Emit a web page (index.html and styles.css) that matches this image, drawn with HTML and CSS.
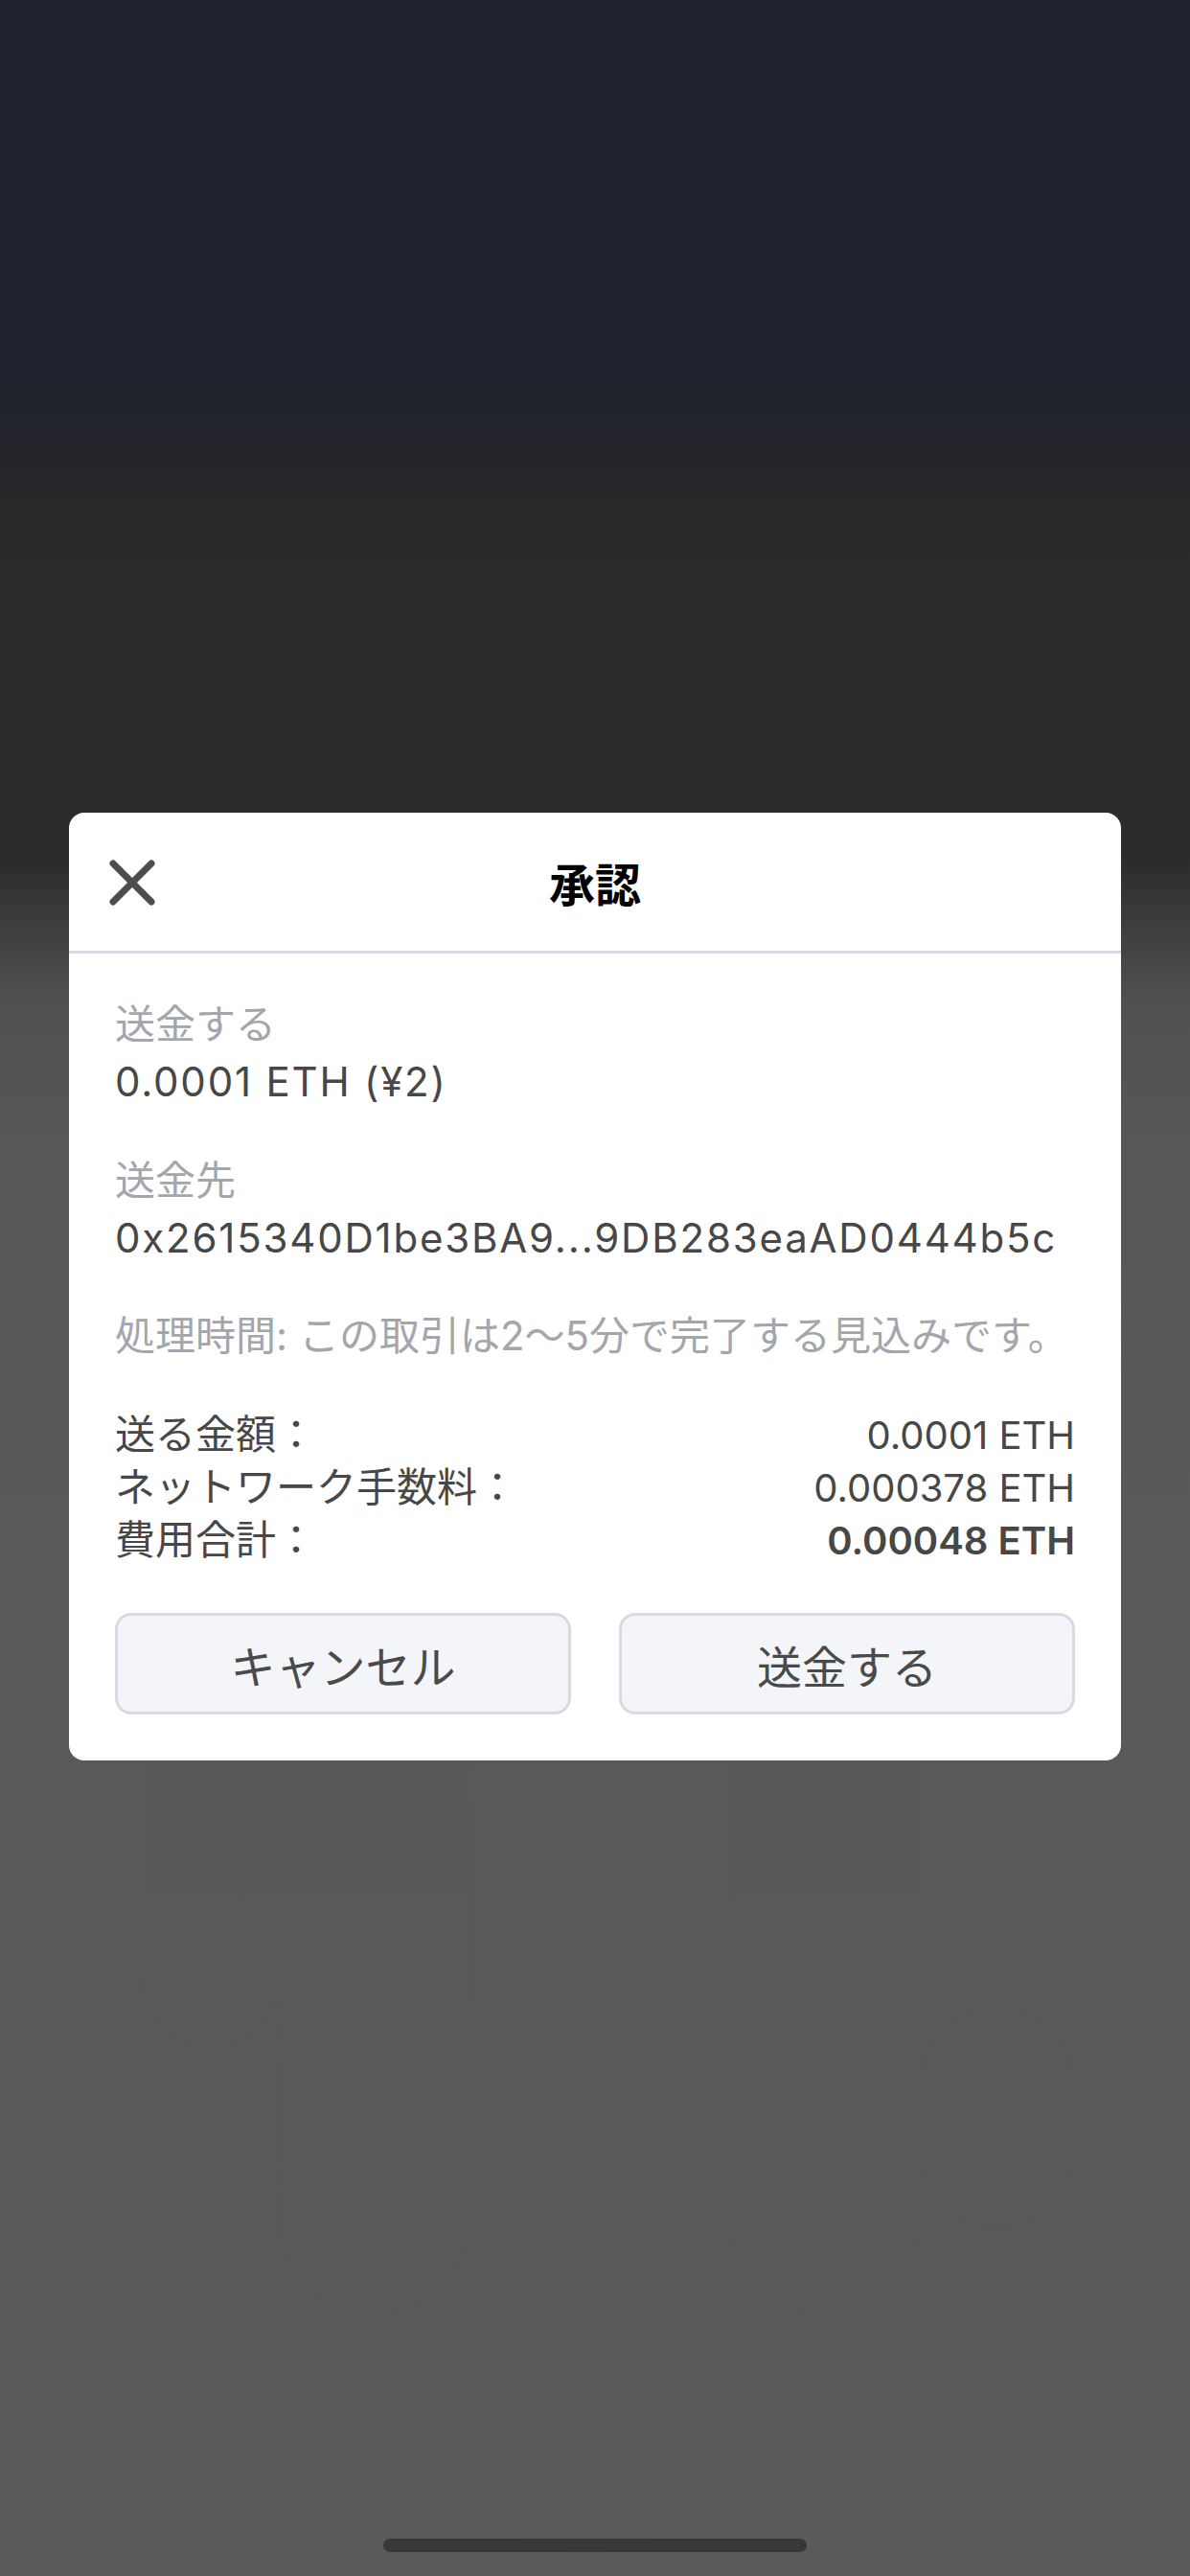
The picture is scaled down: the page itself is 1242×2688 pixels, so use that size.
FILE: index.html
```html
<!DOCTYPE html>
<html lang="ja">
<head>
<meta charset="utf-8">
<title>承認</title>
<link rel="stylesheet" href="styles.css">
</head>
<body>
<div class="screen">
  <div class="ghosts">
    <div class="ghost g1"></div>
    <div class="ghost g2"></div>
    <div class="ghost g3"></div>
    <div class="ghost g4"></div>
    <div class="ghost g5"></div>
  </div>
  <div class="modal">
    <div class="modal-header">
      <button class="close" aria-label="閉じる">
        <svg width="48" height="48" viewBox="0 0 48 48">
          <path d="M4 4 L44 44 M44 4 L4 44" stroke="#4d4d4d" stroke-width="7" stroke-linecap="round" fill="none"/>
        </svg>
      </button>
      <div class="title">承認</div>
      <div></div>
    </div>
    <div class="modal-body">
      <div class="field">
        <div class="label">送金する</div>
        <div class="value">0.0001 ETH (¥2)</div>
      </div>
      <div class="field">
        <div class="label">送金先</div>
        <div class="value">0x2615340D1be3BA9...9DB283eaAD0444b5c</div>
      </div>
      <div class="note">処理時間: この取引は2〜5分で完了する見込みです。</div>
      <div class="summary">
        <div class="row"><span class="k">送る金額：</span><span class="v">0.0001 ETH</span></div>
        <div class="row"><span class="k">ネットワーク手数料：</span><span class="v">0.000378 ETH</span></div>
        <div class="row"><span class="k">費用合計：</span><span class="v strong">0.00048 ETH</span></div>
      </div>
      <div class="actions">
        <button class="btn">キャンセル</button>
        <button class="btn">送金する</button>
      </div>
    </div>
  </div>
  <div class="spacer"></div>
  <div class="home-indicator"></div>
</div>
</body>
</html>
```
FILE: styles.css
```css
* { box-sizing: border-box; }
html, body { margin: 0; padding: 0; }
body {
  width: 1242px;
  height: 2688px;
  overflow: hidden;
  font-family: Inter, "Noto Sans CJK JP", sans-serif;
}
.screen {
  position: relative;
  width: 1242px;
  height: 2688px;
  overflow: hidden;
  display: flex;
  flex-direction: column;
  align-items: stretch;
  padding: 848px 72px 0;
  background: linear-gradient(to bottom,
    #1f212d 0px,
    #20222d 400px,
    #242529 480px,
    #29292a 560px,
    #2c2c2c 640px,
    #2c2c2c 900px,
    #404040 975px,
    #515151 1050px,
    #575757 1200px,
    #595959 1800px,
    #5a5a5a 2688px);
}
.ghosts { position: absolute; inset: 0; pointer-events: none; }
.ghost { position: absolute; }
.g1 { left: 150px; top: 1836px; width: 140px; height: 300px; background: rgba(84,84,84,0.12); border-radius: 0 0 70px 70px; }
.g2 { left: 290px; top: 1836px; width: 200px; height: 580px; background: rgba(88,88,88,0.1); border-radius: 0 0 110px 110px; }
.g3 { left: 760px; top: 1836px; width: 200px; height: 580px; background: rgba(88,88,88,0.1); border-radius: 0 0 110px 110px; }
.g4 { left: 960px; top: 2095px; width: 160px; height: 230px; background: rgba(80,80,80,0.12); border-radius: 80px; }
.g5 { left: 490px; top: 2465px; width: 250px; height: 200px; background: rgba(78,78,78,0.06); border-radius: 50%; }
.modal {
  position: relative;
  background: #ffffff;
  border-radius: 16px;
  overflow: hidden;
}
.modal-header {
  height: 147px;
  display: grid;
  grid-template-columns: 1fr auto 1fr;
  align-items: center;
  border-bottom: 3px solid #d6d9df;
}
.close {
  justify-self: start;
  margin-left: 42px;
  margin-top: 2px;
  padding: 0;
  border: 0;
  background: none;
  width: 48px;
  height: 48px;
  display: flex;
}
.title {
  font-family: "Noto Sans CJK JP", sans-serif;
  font-weight: 700;
  font-size: 48px;
  line-height: 60px;
  color: #000;
}
.modal-body {
  padding: 49px 48px 48px;
  display: flex;
  flex-direction: column;
}
.field { display: flex; flex-direction: column; gap: 10px; margin-bottom: 53px; }
.label {
  font-size: 42px;
  line-height: 50px;
  color: #a3a6ab;
}
.value {
  font-size: 42px;
  line-height: 50px;
  letter-spacing: 1.8px;
  color: #474747;
  white-space: nowrap;
}
.note {
  font-size: 42px;
  line-height: 50px;
  color: #a3a6ab;
  white-space: nowrap;
  margin-top: -1px;
  margin-bottom: 51px;
}
.summary { display: flex; flex-direction: column; }
.row {
  display: flex;
  justify-content: space-between;
  align-items: baseline;
  line-height: 54px;
  color: #474747;
}
.k { font-size: 42px; }
.v { font-size: 40px; }
.strong { font-weight: 600; }
.actions {
  display: grid;
  grid-template-columns: 1fr 1fr;
  gap: 50px;
  margin-top: 48px;
}
.btn {
  height: 106px;
  border: 3px solid #d7dae0;
  border-radius: 17px;
  background: #f4f5f9;
  font-family: "Noto Sans CJK JP", sans-serif;
  font-size: 47px;
  color: #4a4a4a;
  padding: 0;
}
.spacer { flex: 1; }
.home-indicator {
  position: relative;
  align-self: center;
  width: 442px;
  height: 14px;
  border-radius: 7px;
  background: #383838;
  margin-bottom: 25px;
}
```
